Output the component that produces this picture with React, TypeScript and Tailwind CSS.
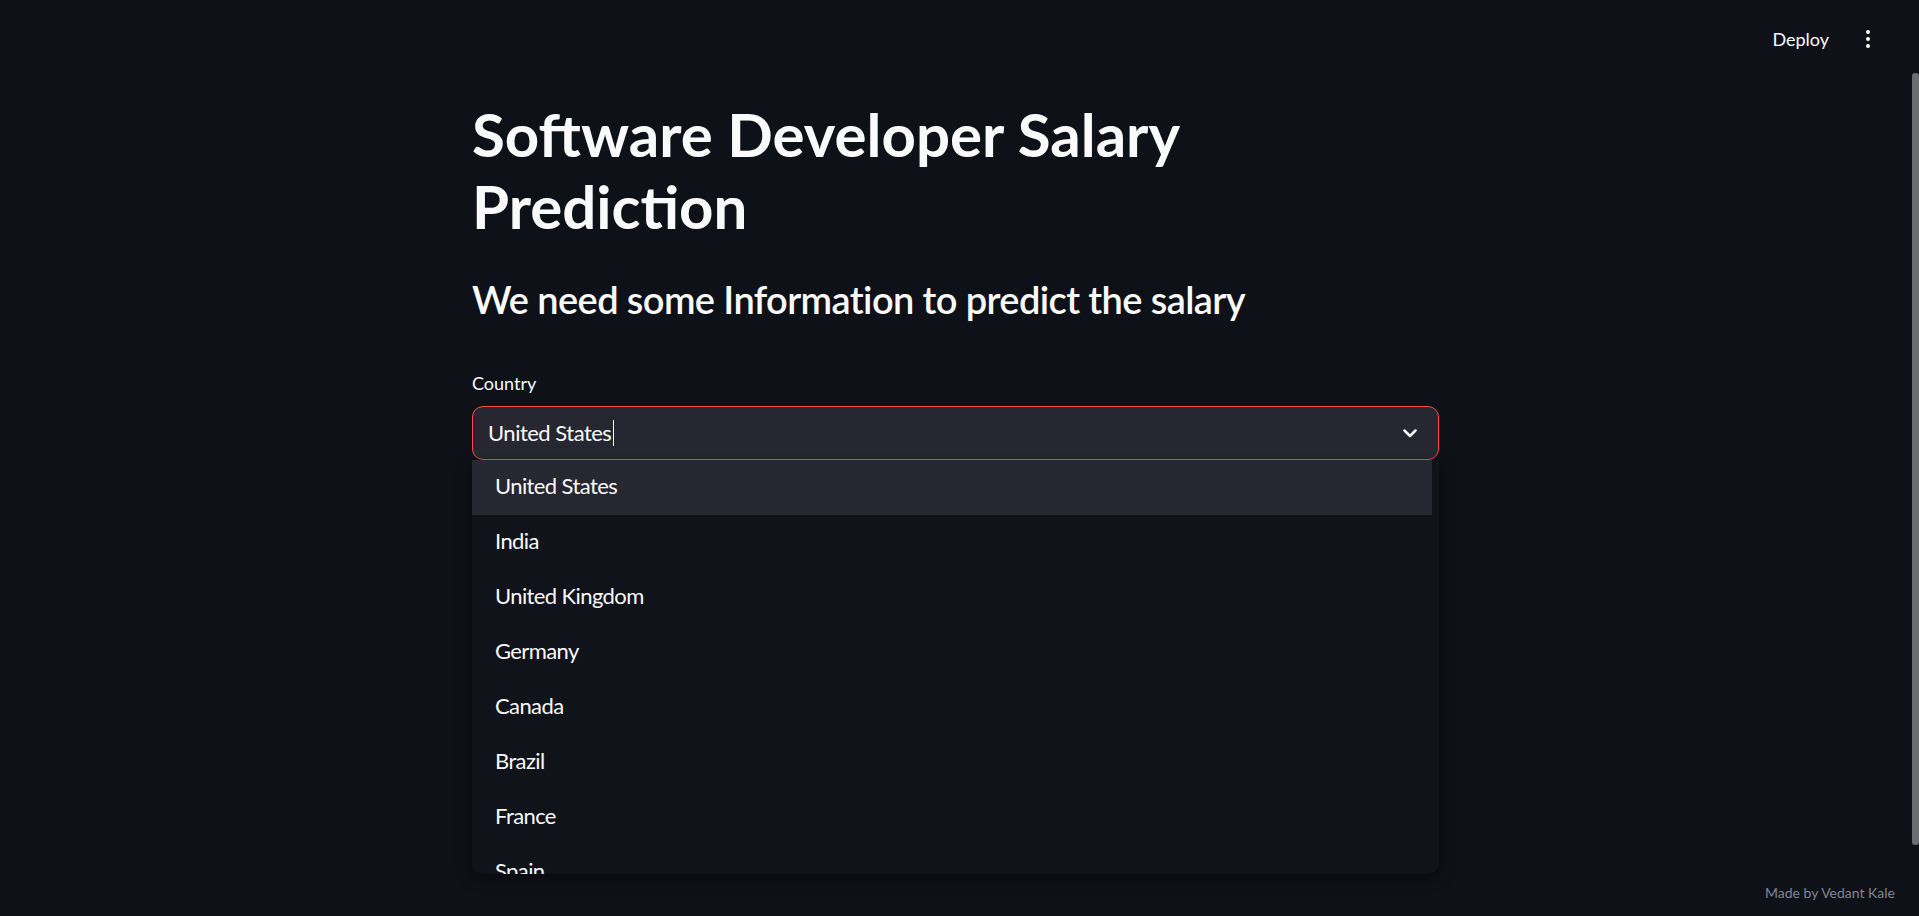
import React from "react";

const countries = ["United States", "India", "United Kingdom", "Germany", "Canada", "Brazil", "France", "Spain"];

export default function App() {
  return (
    <div
      className="relative flex h-[916px] w-full flex-col overflow-hidden bg-[#0e1117] text-[#fafafa]"
      style={{ fontFamily: "Lato, 'Noto Sans', sans-serif" }}
    >
      {/* header */}
      <div className="flex h-[78px] shrink-0 items-center justify-end pr-[39px]">
        <span className="text-[18px] leading-none text-[#fafafa]">Deploy</span>
        <div className="ml-[27px] flex h-[24px] w-[24px] flex-col items-center justify-center gap-[3px]">
          <span className="h-[4px] w-[4px] rounded-full bg-[#fafafa]" />
          <span className="h-[4px] w-[4px] rounded-full bg-[#fafafa]" />
          <span className="h-[4px] w-[4px] rounded-full bg-[#fafafa]" />
        </div>
      </div>

      {/* main */}
      <div className="ml-[472px] mt-[20px] w-[967px]">
        <h1 className="text-[60px] font-bold leading-[72px] tracking-[0px] text-[#fafafa]">
          Software Developer Salary
          <br />
          Prediction
        </h1>
        <h3 className="mt-[34px] text-[38px] font-semibold leading-[46px] tracking-[-0.6px] text-[#fafafa]">
          We need some Information to predict the salary
        </h3>
        <div className="mt-[50px] text-[18px] leading-[22px] text-[#fafafa]">Country</div>
        <div className="relative mt-[12px]">
          <div className="flex h-[54px] items-center rounded-[11px] border border-[#ff4b4b] bg-[#262730] pl-[15px] pr-[21px]">
            <span className="text-[22px] leading-none tracking-[-0.5px] text-[#fafafa]">United States</span>
            <span className="ml-[2px] h-[26px] w-[1px] bg-[#fafafa]" />
            <svg className="ml-auto" width="14" height="9" viewBox="0 0 14 9" fill="none">
              <path d="M1.5 1.5 L7 7 L12.5 1.5" stroke="#fafafa" strokeWidth="2.5" strokeLinecap="round" strokeLinejoin="round" />
            </svg>
          </div>
          {/* dropdown menu */}
          <div className="absolute left-0 right-0 top-[54px] z-10 h-[414px] overflow-hidden rounded-b-[11px] bg-[#10131a] pr-[7px] shadow-[0_4px_16px_rgba(0,0,0,0.45)]">
            {countries.map((c, i) => (
              <div
                key={c}
                className={
                  "flex h-[55px] items-center pb-[4px] pl-[23px] text-[22px] tracking-[-0.6px] text-[#fafafa] " +
                  (i === 0 ? "bg-[#262730]" : "")
                }
              >
                {c}
              </div>
            ))}
          </div>
        </div>
      </div>

      {/* footer */}
      <div className="mt-auto flex justify-end pb-[13px] pr-[24px]">
        <span className="text-[14px] leading-[20px] text-[#808495]">Made by Vedant Kale</span>
      </div>

      {/* page scrollbar */}
      <div className="absolute right-0 top-[73px] h-[772px] w-[7px] rounded-[3px] bg-[#6c6d72]" />
    </div>
  );
}
